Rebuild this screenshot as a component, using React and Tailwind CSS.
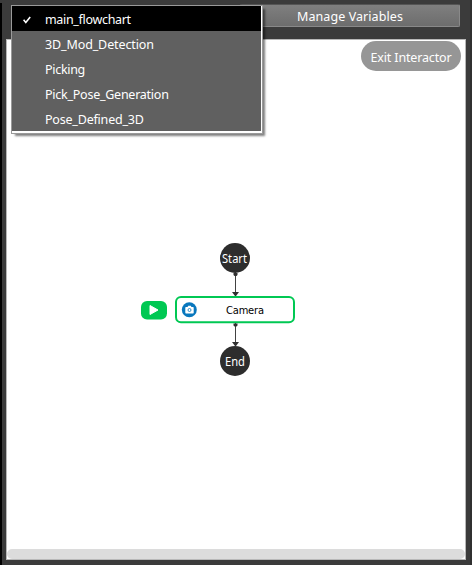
const flowcharts = [
  { name: "main_flowchart", tracking: "tracking-[-0.32px]" },
  { name: "3D_Mod_Detection", tracking: "tracking-[-0.12px]" },
  { name: "Picking", tracking: "tracking-[-0.3px]" },
  { name: "Pick_Pose_Generation", tracking: "tracking-[-0.25px]" },
  { name: "Pose_Defined_3D", tracking: "tracking-[-0.2px]" },
];

function Menu() {
  return (
    <div className="absolute left-[11px] top-[5px] z-10 h-[129px] w-[252px] border border-[#9a9a9a] bg-white pr-px pb-0.5 shadow-[3px_3px_2px_-1px_rgba(0,0,0,0.5)]">
      <ul className="h-[125px] bg-[#606060]">
        {flowcharts.map(({ name, tracking }, i) => (
          <li key={name} className={`flex h-[25px] items-center text-[12.5px] leading-[17px] text-white ${tracking} ${i === 0 ? "bg-black" : ""}`}>
            <span className="flex w-[33px] pl-[11px] pt-0.5">
              {i === 0 && (
                <svg width="8" height="8" viewBox="0 0 8 8">
                  <path d="M.6 3.8 2.8 6.5 7.2 1" fill="none" stroke="white" strokeWidth="1.6" />
                </svg>
              )}
            </span>
            <span className="pt-0.5">{name}</span>
          </li>
        ))}
      </ul>
    </div>
  );
}

function Diagram() {
  return (
    <svg className="absolute left-[133px] top-[203px]" width="160" height="135" viewBox="140 243 160 135">
      <path d="M235.5 272V294M235.5 323V345" stroke="#424242" />
      <circle cx="235" cy="258" r="15" fill="#2d2d2d" />
      <circle cx="235" cy="361" r="15" fill="#2d2d2d" />
      <rect x="176" y="297" width="118" height="25.2" rx="5" fill="white" stroke="#00c853" strokeWidth="2" />
      <path d="M233.5 275v-2h4v2l-1 1h-2zM233.5 325.5v-2h4v2l-1 1h-2zM232 292h7l-3 4h-1zM232 342h7l-3 4h-1z" fill="#303030" />
      <rect x="141" y="301" width="26" height="18.5" rx="6" fill="#00c853" />
      <path d="M150 305.5v9l8-4.5z" fill="white" stroke="white" strokeLinejoin="round" />
      <circle cx="189.3" cy="309.8" r="7.5" fill="#0877bd" />
      <path d="M186 307h1.5l.8-1.3h2.4l.8 1.3h1.5q.7 0 .7.7v5q0 .8-.7.8h-7q-.7 0-.7-.8v-5q0-.7.7-.7z" fill="white" />
      <circle cx="189.5" cy="310" r="1.5" fill="white" stroke="#0877bd" strokeWidth=".8" />
      <g textAnchor="middle" fontSize="12" fill="white">
        <text x="234.5" y="263" textLength="25" lengthAdjust="spacingAndGlyphs">Start</text>
        <text x="235" y="366" textLength="20" lengthAdjust="spacingAndGlyphs">End</text>
        <text x="245" y="314" fill="black" fontSize="11" textLength="38" fontFamily="DejaVu Sans Condensed, DejaVu Sans, sans-serif">Camera</text>
      </g>
    </svg>
  );
}

export default function App() {
  return (
    <div className="relative flex h-[565px] w-[472px] overflow-hidden bg-[#3b3b3b] font-['Noto_Sans',sans-serif] text-[12.5px] text-white">
      <div className="mt-[3px] w-0.5 shrink-0 bg-black" />
      <main className="flex w-[468px] shrink-0 flex-col pl-1">
        <header className="flex h-[39px] shrink-0 justify-end pt-1 pr-2.5">
          <button className="flex h-[23px] w-[220px] items-center justify-center rounded-[2px] border border-[#898989] border-t-[#555] bg-linear-to-b from-[#7f7f7f] to-[#6d6d6d] pt-0.5 leading-[17px] tracking-[0.08px]">Manage Variables</button>
        </header>
        <section className="relative flex h-[521px] w-[460px] flex-col justify-between border border-[#b8b8b8] bg-white">
          <button className="mt-px mr-1 flex h-[30px] w-[100px] items-center justify-center self-end rounded-full bg-[#969696] pt-[3px] leading-[17px] tracking-[-0.15px]">Exit Interactor</button>
          <Diagram />
          <div className="h-2.5 rounded-full bg-[#dcdcdc]" />
        </section>
      </main>
      <div className="w-0.5 bg-[#303030]" />
      <Menu />
    </div>
  );
}
